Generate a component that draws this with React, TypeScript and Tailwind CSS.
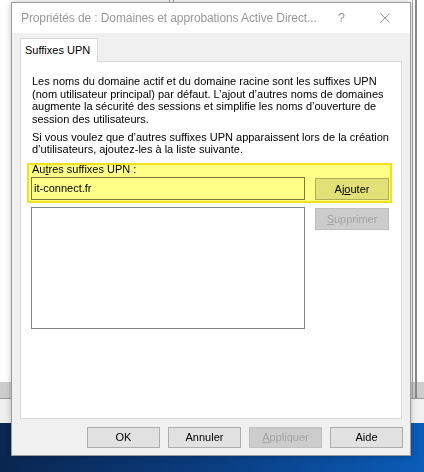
import React from "react";

const UI = { fontFamily: '"Liberation Sans", Arial, sans-serif' };

function Btn({
  children,
  disabled,
  className = "",
}: {
  children: React.ReactNode;
  disabled?: boolean;
  className?: string;
}) {
  return (
    <div
      className={
        "flex items-center justify-center border text-[11px] leading-none " +
        (disabled
          ? "border-[#bfbfbf] bg-[#cccccc] text-[#a3a3a3] "
          : "border-[#adadad] bg-[#e1e1e1] text-black ") +
        className
      }
    >
      {children}
    </div>
  );
}

export default function App() {
  return (
    <div
      className="relative h-[472px] w-[424px] overflow-hidden bg-[linear-gradient(90deg,#0a2650_0%,#0a3d80_50%,#0b5cb8_100%)]"
      style={UI}
    >
      {/* window behind on the desktop */}
      <div className="absolute left-0 top-0 flex h-[423px] w-[424px] flex-col bg-[#f0f0f0]">
        <div className="relative h-[382px] bg-white">
          <div className="absolute left-[169px] top-0 h-[3px] w-px bg-[#9a9a9a]" />
          <div className="absolute left-[173px] top-0 h-[3px] w-px bg-[#9a9a9a]" />
          <div className="absolute left-[412px] top-0 h-[398px] w-px bg-[#a8a8a8]" />
          <div className="absolute left-[415px] top-0 h-[398px] w-[2px] bg-[#8a8a8a]" />
        </div>
        <div className="h-[16px] bg-[#cdcdcd]" />
        <div className="h-px bg-[#9a9a9a]" />
        <div className="flex-1 bg-[#f0f0f0]" />
      </div>

      {/* dialog */}
      <div className="absolute left-[11px] top-[2px] flex h-[454px] w-[400px] flex-col border border-[#9c9c9c] bg-[#f0f0f0] shadow-[0_0_6px_rgba(0,0,0,0.25)]">
        {/* title bar */}
        <div className="flex h-[30px] items-center bg-white">
          <div className="ml-[9px] flex-1 whitespace-nowrap text-[12px] tracking-[-0.1px] text-[#999999]">
            Propriétés de : Domaines et approbations Active Direct...
          </div>
          <div className="mr-[35px] text-[13px] text-[#999999]">?</div>
          <svg width="10" height="10" viewBox="0 0 10 10" className="mr-[20px]">
            <path d="M0.5 0.5 L9.5 9.5 M9.5 0.5 L0.5 9.5" stroke="#9a9a9a" strokeWidth="1" fill="none" />
          </svg>
        </div>

        {/* body */}
        <div className="flex flex-1 flex-col px-[8px] pt-[5px]">
          {/* tab */}
          <div className="relative z-10 -mb-px flex h-[24px] w-[78px] items-center border border-b-0 border-[#d9d9d9] bg-white pl-[4px] text-[11px] text-black">
            Suffixes UPN
          </div>

          {/* panel */}
          <div className="relative flex h-[358px] w-[382px] flex-col border border-[#d9d9d9] bg-white pl-[10px] pr-[11px] pt-[13px] text-[11px] text-black">
            <p className="pl-px leading-[12.5px]">
              Les noms du domaine actif et du domaine racine sont les suffixes UPN
              <br />
              (nom utilisateur principal) par défaut. L’ajout d’autres noms de domaines
              <br />
              augmente la sécurité des sessions et simplifie les noms d’ouverture de
              <br />
              session des utilisateurs.
            </p>
            <p className="mt-[6px] pl-px leading-[12px]">
              Si vous voulez que d’autres suffixes UPN apparaissent lors de la création
              <br />
              d’utilisateurs, ajoutez-les à la liste suivante.
            </p>
            <div className="mt-[8px] pl-px leading-[12px]">
              Au<span className="underline">t</span>res suffixes UPN :
            </div>

            <div className="mt-[2px] flex items-start gap-[10px]">
              <div className="flex h-[23px] w-[274px] items-center border border-[#7a7a7a] bg-white pl-[2px]">
                it-connect.fr
              </div>
              <Btn className="mt-px h-[22px] w-[74px]">
                Aj<span className="underline">o</span>uter
              </Btn>
            </div>

            <div className="mt-[7px] flex items-start gap-[10px]">
              <div className="h-[122px] w-[274px] border border-[#828282] bg-white" />
              <Btn disabled className="mt-px h-[22px] w-[74px]">
                <span className="underline">S</span>upprimer
              </Btn>
            </div>

            {/* yellow highlight annotation */}
            <div className="pointer-events-none absolute left-[6px] top-[101px] h-[40px] w-[365px] border-2 border-[#f2e21e] bg-[#ffff88] mix-blend-multiply" />
          </div>

          {/* bottom buttons */}
          <div className="mt-[8px] flex justify-end gap-[8px]">
            <Btn className="h-[21px] w-[73px]">OK</Btn>
            <Btn className="h-[21px] w-[73px]">Annuler</Btn>
            <Btn disabled className="h-[21px] w-[73px]">
              <span className="underline">A</span>ppliquer
            </Btn>
            <Btn className="-mr-px h-[21px] w-[73px]">Aide</Btn>
          </div>
        </div>
      </div>
    </div>
  );
}
